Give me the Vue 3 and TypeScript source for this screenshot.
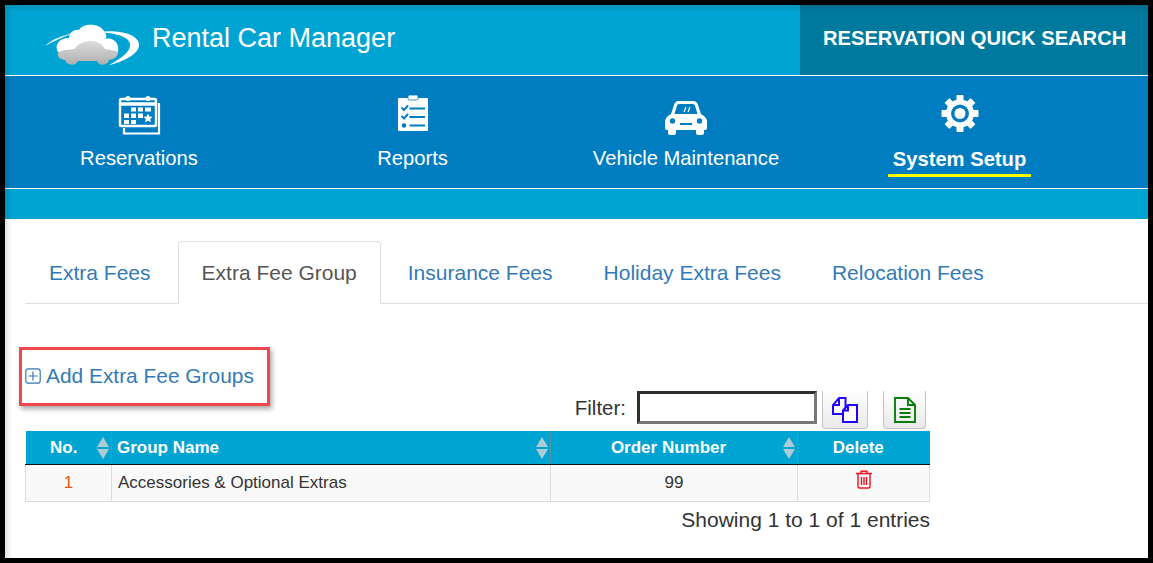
<script setup lang="ts">
const tabs = ['Extra Fees', 'Extra Fee Group', 'Insurance Fees', 'Holiday Extra Fees', 'Relocation Fees']
const activeTab = 'Extra Fee Group'
const gearTeeth = [0, 45, 90, 135, 180, 225, 270, 315]
</script>

<template>
  <div class="frame">
    <div class="page">
      <header class="top">
        <div class="brand">
          <svg class="logo" width="96" height="44" viewBox="0 0 96 44">
            <defs>
              <linearGradient id="carGrad" x1="0" y1="0" x2="0" y2="1">
                <stop offset="0" stop-color="#dcdcdc" />
                <stop offset="1" stop-color="#afafaf" />
              </linearGradient>
            </defs>
            <path d="M0 23 C7 16 18 12 29 10 C18 14 9 18 0 23Z" fill="#d8f0f8" />
            <path d="M52 9 C74 6 94 11 94 22 C94 31 78 39 64 42 C77 35 86 28 85 21 C84 14 72 10 52 9Z" fill="#fff" />
            <path d="M13 29 C9 22 14 15 24 15 C24 9 30 6 34 7 C38 0 54 0 59 8 C62 12 62 14 60 16 C68 14 75 20 73 29 C60 31 26 31 13 29Z" fill="#fff" />
            <path d="M13 30 C17 26 24 27 29 26 C34 20 40 18 46 18 C52 18 57 21 60 26 C64 27 70 27 73 29 C73 33 70 36 64 37 C63 42 54 44 52 38 L33 38 C31 43 22 43 20 37 C15 37 12 33 13 30Z" fill="url(#carGrad)" />
          </svg>
          <span class="brand-name">Rental Car Manager</span>
        </div>
        <div class="quick">RESERVATION QUICK SEARCH</div>
      </header>

      <nav class="nav">
        <div class="nav-item">
          <svg class="nav-icon" width="44" height="40" viewBox="0 0 44 40" fill="none" stroke="#fff">
            <path d="M3 30V5.500Q3 4 4.500 4H37.500Q39 4 39 5.500V30Q39 31 37.500 31H4.500Q3 31 3 30Z" stroke-width="2.400" />
            <path d="M3 9H39" stroke-width="3.500" />
            <path d="M42 8V38.500H7V33" stroke-width="2.200" />
            <circle cx="11" cy="3.500" r="2.500" fill="#fff" stroke="none" />
            <circle cx="31" cy="3.500" r="2.500" fill="#fff" stroke="none" />
            <g fill="#fff" stroke="none">
              <rect x="14" y="12.500" width="5" height="4" /><rect x="21" y="12.500" width="5" height="4" /><rect x="28" y="12.500" width="6" height="4" />
              <rect x="7" y="18.500" width="5" height="4.500" /><rect x="14" y="18.500" width="5" height="4.500" /><rect x="21" y="18.500" width="5" height="4.500" />
              <rect x="7" y="25" width="5" height="4" /><rect x="14" y="25" width="5" height="4" />
              <path d="M31 18.500l1.400 2.900 3.200.4-2.300 2.200.6 3.200L31 25.700 28.100 27.200l.6-3.200-2.300-2.200 3.200-.4Z" />
            </g>
          </svg>
          <span class="nav-label">Reservations</span>
        </div>
        <div class="nav-item">
          <svg class="nav-icon" width="44" height="40" viewBox="0 0 44 40">
            <path d="M8 3H36Q37 3 37 4V35Q37 36 36 36H8Q7 36 7 35V4Q7 3 8 3Z" fill="#fff" />
            <rect x="17" y="0" width="10" height="5" rx="1.500" fill="#fff" stroke="#007dc1" stroke-width=".8" />
            <g fill="none" stroke="#007dc1" stroke-width="1.900">
              <path d="M10.500 12.500l2.500 2.500 4-4.500" />
              <path d="M10.500 21l2.500 2.500 4-4.500" />
              <path d="M18.500 13.500H34M18.500 22H34M18.500 30.500H34" />
            </g>
            <circle cx="13" cy="30.500" r="2.200" fill="#007dc1" />
          </svg>
          <span class="nav-label">Reports</span>
        </div>
        <div class="nav-item">
          <svg class="nav-icon" width="44" height="40" viewBox="0 0 44 40">
            <path d="M10 10Q11 6 15 6H29Q33 6 34 10L37 19Q43 22 43 27V33Q43 35 41 35H40V38Q40 40 38 40H34Q32 40 32 38V35H12V38Q12 40 10 40H6Q4 40 4 38V35H3Q1 35 1 33V27Q1 22 7 19Z" fill="#fff" />
            <path d="M13 10.500Q13.500 9 15 9H29Q30.500 9 31 10.500L33.500 19H10.500Z" fill="#007dc1" />
            <path d="M20 17L22 12M24 17L26 12" stroke="#fff" stroke-width="1.200" />
            <circle cx="8.500" cy="26" r="2.700" fill="#007dc1" />
            <circle cx="35.500" cy="26" r="2.700" fill="#007dc1" />
            <rect x="16" y="28" width="12" height="2" fill="#007dc1" />
          </svg>
          <span class="nav-label">Vehicle Maintenance</span>
        </div>
        <div class="nav-item active">
          <svg class="nav-icon" width="44" height="40" viewBox="0 0 44 40">
            <g fill="#fff">
              <rect
                v-for="a in gearTeeth"
                :key="a"
                x="18.500"
                y="0"
                width="7"
                height="8"
                rx="1"
                :transform="`rotate(${a} 22 18.500)`"
              />
            </g>
            <circle cx="22" cy="18.500" r="14" fill="#fff" />
            <circle cx="22" cy="18.500" r="9" fill="#007dc1" />
            <circle cx="22" cy="18.500" r="5.500" fill="#fff" />
          </svg>
          <span class="nav-label">System Setup</span>
        </div>
      </nav>

      <div class="strip"></div>

      <main class="content">
        <ul class="tabs">
          <li v-for="t in tabs" :key="t" class="tab" :class="{ current: t === activeTab }">{{ t }}</li>
        </ul>

        <div class="add-box">
          <svg class="plus" width="16" height="16" viewBox="0 0 16 16" fill="none" stroke="#337ab7" stroke-width="1.200">
            <rect x=".8" y=".8" width="14.400" height="14.400" rx="2.500" />
            <path d="M8 3.500V12.500M3.500 8H12.500" />
          </svg>
          <span class="add-label">Add Extra Fee Groups</span>
        </div>

        <div class="grid-wrap">
          <div class="tools">
            <label class="filter-label">Filter:</label>
            <input class="filter-input" type="text" />
            <button class="tool-btn first" type="button">
              <svg width="30" height="28" viewBox="0 0 30 28" fill="#fff" stroke="#2200ff" stroke-width="2">
                <path d="M9 2H15.500V18H3V9Z" />
                <path d="M9 2V9H3" fill="none" />
                <path d="M18 9H27V26H13V14.500Z" />
                <path d="M18 9V14.500H13" fill="none" />
              </svg>
            </button>
            <button class="tool-btn second" type="button">
              <svg width="24" height="28" viewBox="0 0 24 28" fill="none" stroke="#0a7d0a" stroke-width="1.900">
                <path d="M2 2H15L22 9V26H2Z" />
                <path d="M15 2V9H22" />
                <path d="M6.500 13H17.500M6.500 17H17.500M6.500 21H17.500" />
              </svg>
            </button>
          </div>

          <table class="grid">
            <colgroup>
              <col class="c1" /><col class="c2" /><col class="c3" /><col class="c4" />
            </colgroup>
            <thead>
              <tr>
                <th class="sortable">No.<span class="sort"><i class="up"></i><i class="down"></i></span></th>
                <th class="sortable left">Group Name<span class="sort"><i class="up"></i><i class="down"></i></span></th>
                <th class="sortable">Order Number<span class="sort"><i class="up"></i><i class="down"></i></span></th>
                <th class="plain">Delete</th>
              </tr>
            </thead>
            <tbody>
              <tr>
                <td class="num">1</td>
                <td class="name">Accessories &amp; Optional Extras</td>
                <td>99</td>
                <td class="del">
                  <svg width="18" height="19" viewBox="0 0 18 19" fill="none" stroke="#f5101f" stroke-width="1.400">
                    <path d="M1 3.500H17M6 3.500V1.200H12V3.500" />
                    <path d="M3 3.500V16.500Q3 18 4.500 18H13.500Q15 18 15 16.500V3.500" />
                    <path d="M6.500 7V15M9 7V15M11.500 7V15" />
                  </svg>
                </td>
              </tr>
            </tbody>
          </table>

          <div class="info">Showing 1 to 1 of 1 entries</div>
        </div>
      </main>
    </div>
  </div>
</template>

<style scoped>
.frame {
  width: 1153px;
  height: 563px;
  box-sizing: border-box;
  padding: 5px;
  background: #000;
  font-family: "Liberation Sans", Arial, sans-serif;
  overflow: hidden;
}
.page {
  position: relative;
  width: 1143px;
  height: 553px;
  background: #fff;
  overflow: hidden;
}
.page::after {
  content: "";
  position: absolute;
  inset: 0;
  box-shadow: inset 3px 3px 5px rgba(0, 0, 0, 0.13);
  pointer-events: none;
}
.top {
  display: flex;
  height: 71px;
  box-sizing: border-box;
  background: #00a4d3;
  border-bottom: 1px solid #fff;
}
.brand {
  flex: 1;
  display: flex;
  align-items: flex-start;
  padding-left: 40px;
}
.logo {
  margin-top: 18px;
}
.brand-name {
  margin-left: 11px;
  margin-top: 16px;
  color: #fff;
  font-size: 27px;
  line-height: 34px;
}
.quick {
  width: 348px;
  box-sizing: border-box;
  padding: 21px 0 0 23px;
  background: #00799e;
  color: #fff;
  font-size: 20.150px;
  line-height: 24px;
  font-weight: 700;
  white-space: nowrap;
}
.nav {
  display: grid;
  grid-template-columns: repeat(4, 273.5px);
  margin-left: -2.750px;
  height: 113px;
  box-sizing: border-box;
  background: #007dc1;
  border-bottom: 1px solid #fff;
}
.nav-item {
  display: flex;
  flex-direction: column;
  align-items: center;
  padding-top: 19px;
  color: #fff;
}
.nav-icon {
  display: block;
}
.nav-label {
  margin-top: 10px;
  font-size: 20.200px;
  line-height: 26px;
}
.active .nav-label {
  font-weight: 700;
  padding: 1px 5px 2px;
  border-bottom: 3px solid #ff0;
}
.strip {
  height: 30px;
  background: #00a4d3;
}
.content {
  padding: 22px 0 0 20px;
}
.tabs {
  display: flex;
  margin: 0;
  padding: 0;
  list-style: none;
  height: 63px;
  box-sizing: border-box;
  border-bottom: 1px solid #ddd;
}
.tab {
  height: 62px;
  box-sizing: border-box;
  padding: 0 23px;
  margin-right: 3px;
  border: 1px solid transparent;
  border-radius: 4px 4px 0 0;
  color: #337ab7;
  font-size: 21px;
  line-height: 62px;
  white-space: nowrap;
}
.tab.current {
  height: 63px;
  border-color: #ddd;
  border-bottom-color: #fff;
  background: #fff;
  color: #555;
}
.add-box {
  position: relative;
  z-index: 1;
  display: flex;
  align-items: center;
  box-sizing: border-box;
  width: 251px;
  height: 59px;
  margin: 43px 0 0 -6px;
  padding: 0 0 2px 3px;
  border: 3px solid #f0474c;
  box-shadow: 2px 3px 5px rgba(0, 0, 0, 0.35);
}
.plus {
  flex: none;
}
.add-label {
  margin-left: 5px;
  color: #337ab7;
  font-size: 20.900px;
  line-height: 26px;
  white-space: nowrap;
}
.grid-wrap {
  width: 905px;
  margin-top: -15px;
}
.tools {
  display: flex;
  justify-content: flex-end;
  align-items: flex-start;
  height: 40px;
  padding-right: 4px;
}
.filter-label {
  margin-right: 11px;
  color: #333;
  font-size: 20.500px;
  line-height: 34px;
}
.filter-input {
  width: 180px;
  height: 33px;
  box-sizing: border-box;
  margin-top: 0;
  padding: 0;
  border: 3px solid;
  border-color: #2e2e2e #777 #777 #2e2e2e;
  background: #fff;
}
.tool-btn {
  display: flex;
  align-items: center;
  justify-content: center;
  height: 38px;
  padding: 0;
  border: 1px solid #c4c4c4;
  border-top: none;
  border-radius: 0 0 4px 4px;
  background: linear-gradient(#fff, #e9e9e9);
}
.tool-btn.first {
  width: 46px;
  margin-left: 5px;
}
.tool-btn.second {
  width: 43px;
  margin-left: 15px;
}
.grid {
  width: 904px;
  border-collapse: collapse;
  table-layout: fixed;
}
.c1 { width: 86px; }
.c2 { width: 439px; }
.c3 { width: 247px; }
.c4 { width: 132px; }
th {
  position: relative;
  height: 33px;
  padding: 1px 11px 0 0;
  box-sizing: border-box;
  background: #00a4d3;
  border-left: 1px solid #4d94ad;
  border-bottom: 1px solid #111;
  color: #fff;
  font-size: 17px;
  font-weight: 700;
  text-align: center;
}
th:first-child {
  border-left: none;
  padding-right: 9px;
}
th.left {
  padding-left: 5px;
  text-align: left;
}
.sort {
  position: absolute;
  top: 6px;
  right: 2px;
  display: flex;
  flex-direction: column;
  gap: 2px;
}
.sort i {
  display: block;
  width: 0;
  height: 0;
  border-left: 6.500px solid transparent;
  border-right: 6.500px solid transparent;
}
.sort .up {
  border-bottom: 10px solid #aecbd8;
}
.sort .down {
  border-top: 10px solid #aecbd8;
}
td {
  height: 37px;
  padding: 0;
  box-sizing: border-box;
  background: #f9f9f9;
  border: 1px solid #ddd;
  color: #333;
  font-size: 17px;
  text-align: center;
}
td.num {
  color: #e8590c;
}
td.name {
  padding-left: 6px;
  text-align: left;
}
td.del {
  padding: 0 0 6px 0;
  line-height: 0;
}
.info {
  margin-top: 5px;
  color: #333;
  font-size: 21px;
  line-height: 26px;
  text-align: right;
}
</style>

<style>
html, body {
  margin: 0;
  background: #000;
}
</style>
